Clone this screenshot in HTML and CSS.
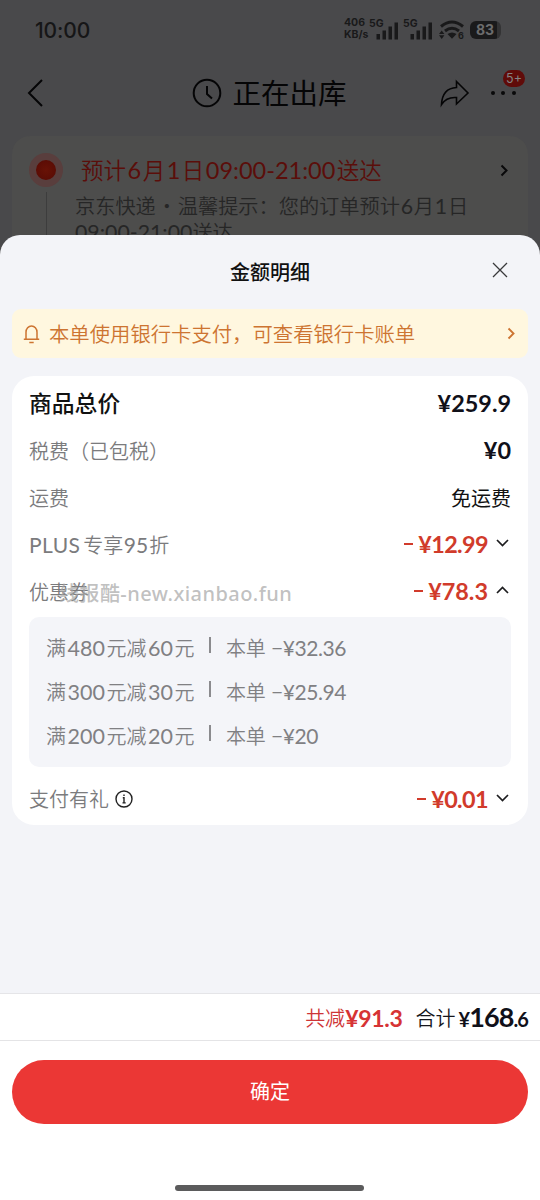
FILE: index.html
```html
<!DOCTYPE html>
<html lang="zh-CN">
<head>
<meta charset="utf-8">
<meta name="viewport" content="width=device-width, initial-scale=1">
<title>金额明细</title>
<link rel="stylesheet" href="styles.css">
</head>
<body>
<div class="screen">
  <section class="order">
    <div class="status">
      <span class="clock">10:00</span>
      <div class="indicators">
        <div class="speed"><span>406</span><span>KB/s</span></div>
        <div class="signal"><span class="gen">5G</span><svg width="24" height="19" viewBox="0 0 24 19"><path d="M1.500 13h3.500v5.500H1.500zM7.500 9.500h3.500v9H7.500zM13.500 5.500h3.500v13H13.500zM19.500 1.500h3.500v17H19.500z"/></svg></div>
        <div class="signal second"><span class="gen">5G</span><svg width="24" height="19" viewBox="0 0 24 19"><path d="M1.500 13h3.500v5.500H1.500zM7.500 9.500h3.500v9H7.500zM13.500 5.500h3.500v13H13.500zM19.500 1.500h3.500v17H19.500z"/></svg></div>
        <svg class="wifi" width="26" height="20" viewBox="0 0 26 20"><g fill="none" stroke="#19191a" stroke-width="3"><path d="M2 6.500Q13-2.500 24 6.500"/><path d="M6 11Q13 5.500 20 11"/></g><path d="M8.500 14q4.500-3 9 0L13 18.800zM0 14l2.700-3.500L5.400 14zM0 15.300h5.400L2.700 19z"/><text x="19" y="19.300">6</text></svg>
        <div class="battery"><span>83</span></div>
      </div>
    </div>
    <div class="nav">
      <svg class="back" width="18" height="30" viewBox="0 0 18 30"><path d="M16 2 3 15l13 13"/></svg>
      <div class="state">
        <svg width="30" height="30" viewBox="0 0 30 30"><circle cx="15" cy="15" r="13.300"/><path d="M15 8v8l5 4.500"/></svg>
        <h1>正在出库</h1>
      </div>
      <div class="actions">
        <svg width="30" height="28" viewBox="0 0 30 28"><path d="M16.500 2.500 28 14 16.500 25v-6.500C10 18 5 20 1.500 25.500 2 15.500 7 9 16.500 8.500z"/></svg>
        <div class="more"><i></i><i></i><i></i><span class="badge">5+</span></div>
      </div>
    </div>
    <div class="delivery">
      <div class="track"><i class="pin"></i><i class="line"></i></div>
      <div class="info">
        <p class="eta">预计<b>6</b>月<b>1</b>日<b>09:00-21:00</b>送达</p>
        <p class="tip">京东快递<span class="dot">·</span>温馨提示：您的订单预计<b>6</b>月<b>1</b>日<br><b class="hours">09:00-21:00</b>送达</p>
      </div>
      <svg class="go" width="9" height="13" viewBox="0 0 9 13"><path d="M1.500 1.500l5 5-5 5"/></svg>
    </div>
  </section>

  <section class="sheet">
    <header class="sheet-head">
      <h2>金额明细</h2>
      <svg class="close" width="16" height="16" viewBox="0 0 16 16"><path d="M1 1l14 14M15 1 1 15"/></svg>
    </header>
    <div class="notice">
      <svg width="17" height="20" viewBox="0 0 17 20"><path d="M.8 15.300h15.400M3 15V8.300a5.500 6.300 0 0 1 11 0V15M6.300 18.600h4.400"/></svg>
      <span>本单使用银行卡支付，可查看银行卡账单</span>
      <svg class="notice-go" width="8" height="13" viewBox="0 0 8 13"><path d="M1.500 1.500l5 5-5 5"/></svg>
    </div>
    <div class="card">
      <div class="row total"><span class="label">商品总价</span><span class="price dark">¥259.9</span></div>
      <div class="row"><span class="label">税费（已包税）</span><span class="price dark">¥0</span></div>
      <div class="row"><span class="label">运费</span><span class="free">免运费</span></div>
      <div class="row"><span class="label plus"><b>PLUS</b>专享<b>95</b>折</span><span class="price cut tight"><i></i>¥12.99</span><svg class="fold" width="13" height="8" viewBox="0 0 13 8"><path d="M1 1l5.500 5.500L12 1"/></svg></div>
      <div class="row"><span class="label">优惠券</span><span class="price cut"><i></i>¥78.3</span><svg class="fold" width="13" height="8" viewBox="0 0 13 8"><path d="M1 7l5.500-5.500L12 7"/></svg><span class="watermark">线报酷-new.xianbao.fun</span></div>
      <ul class="coupons">
        <li><span>满<b>480</b>元减<b>60</b>元</span><i></i><span>本单</span><b class="amount">−¥32.36</b></li>
        <li><span>满<b>300</b>元减<b>30</b>元</span><i></i><span>本单</span><b class="amount">−¥25.94</b></li>
        <li><span>满<b>200</b>元减<b>20</b>元</span><i></i><span>本单</span><b class="amount">−¥20</b></li>
      </ul>
      <div class="row gift"><span class="label">支付有礼</span><svg class="about" width="18" height="18" viewBox="0 0 18 18"><circle cx="9" cy="9" r="8"/><path d="M7.800 7.800H9v5M7.500 12.900h3.200M9 4.600v1.500"/></svg><span class="price cut tight"><i></i>¥0.01</span><svg class="fold" width="13" height="8" viewBox="0 0 13 8"><path d="M1 1l5.500 5.500L12 1"/></svg></div>
    </div>
    <footer class="footer">
      <div class="sum"><span class="saved">共减</span><strong class="saved-value">¥91.3</strong><span class="sum-label">合计</span><strong class="pay"><small class="yen">¥</small>168<small>.6</small></strong></div>
      <button class="confirm" type="button">确定</button>
      <div class="home"></div>
    </footer>
  </section>
</div>
</body>
</html>
```

FILE: styles.css
```css
* { box-sizing: border-box; margin: 0; padding: 0; }
body { background: #f3f4f8; font-family: "Noto Sans CJK SC", sans-serif; font-size: 20px; }
b { font-family: Lato, sans-serif; font-weight: 400; }
i { font-style: normal; }
svg { display: block; flex: none; overflow: visible; }
.screen { width: 540px; height: 1200px; overflow: hidden; display: flex; flex-direction: column; }

/* dimmed order page */
.order { height: 260px; flex: none; overflow: hidden; background: #49494b; }
.status { height: 60px; padding: 0 39px 0 35px; display: flex; align-items: center; justify-content: space-between; }
.clock { padding-top: 2px; font: 500 21px/24px Inter, sans-serif; color: #161617; letter-spacing: -.1px; }
.indicators { display: flex; align-items: center; color: #19191a; fill: #19191a; }
.speed { width: 25px; display: flex; flex-direction: column; margin-top: -2px; font: 700 10.500px/12px Inter, sans-serif; }
.signal { width: 30px; display: flex; position: relative; justify-content: flex-end; }
.gen { position: absolute; left: 0; top: -3px; font: 700 10.500px/11px Inter, sans-serif; }
.signal.second { width: 34px; }
.second .gen { left: 4px; }
.wifi { margin-left: 6px; }
.wifi text { font: 700 9px Inter, sans-serif; }
.battery { margin-left: 5px; width: 31px; height: 18px; border-radius: 6px; background: linear-gradient(90deg, #1a1a1b 27px, #333334 27px); display: flex; align-items: center; padding-left: 6px; font: 700 14px/18px Inter, sans-serif; color: #6c6c6d; }
.nav { height: 66px; padding: 0 24px 0 26px; display: flex; align-items: center; justify-content: space-between; }
.nav svg { fill: none; stroke: #050506; stroke-width: 2; }
.back { margin-right: 55px; }
.state { display: flex; align-items: center; gap: 10px; }
h1 { margin-top: -2px; font-size: 28.500px; font-weight: 400; line-height: 40px; color: #050506; }
.actions { display: flex; align-items: center; gap: 21px; }
.actions svg { stroke-width: 1.600; }
.more { width: 25px; display: flex; justify-content: space-between; position: relative; }
.more i { width: 4px; height: 4px; border-radius: 50%; background: #09090a; }
.badge { position: absolute; right: -9px; top: -21px; width: 22px; height: 17px; border-radius: 9px; background: #600b09; color: #838383; font: 12.500px/17px Inter, sans-serif; text-align: center; }
.delivery { margin: 10px 12px 0; height: 130px; border-radius: 18px; background: #4d4d4c; display: flex; padding: 17px 19px 0 17px; }
.track { width: 34px; display: flex; flex-direction: column; align-items: center; flex: none; }
.pin { width: 34px; height: 34px; border: 7.500px solid #593e3d; border-radius: 50%; background: radial-gradient(#681206, #560a04); }
.line { width: 1px; height: 60px; margin-top: 5px; background: #3d3d3d; }
.info { margin: -1px 0 0 12px; white-space: nowrap; font-weight: 350; }
.eta { padding-left: 6px; font-size: 22.500px; line-height: 34px; color: #5b0e0a; }
.eta b { margin: 0 1.500px; font-size: 23.500px; }
.tip { font-size: 20.200px; line-height: 26px; margin-top: 6px; color: #262626; }
.tip b { margin: 0 .8px; font-size: 21.300px; }
.tip .hours { margin: 0; }
.dot { display: inline-block; width: 22px; text-align: center; }
.go { margin: 11px 0 0 auto; fill: none; stroke: #09090a; stroke-width: 2; }

/* bottom sheet */
.sheet { flex: 1; margin-top: -25px; position: relative; display: flex; flex-direction: column; border-radius: 20px 20px 0 0; background: #f3f4f8; }
.sheet-head { height: 74px; padding-bottom: 2px; display: flex; align-items: center; justify-content: center; position: relative; }
h2 { font-size: 20px; font-weight: 500; color: #111; }
.close { position: absolute; right: 32px; top: 27px; fill: none; stroke: #39393b; stroke-width: 1.300; }
.notice { height: 49px; margin: 0 12px; padding: 0 13px 0 11px; border-radius: 9px; background: #fff7df; color: #cd7431; display: flex; align-items: center; font-size: 20.350px; font-weight: 350; }
.notice span { margin-top: -2px; }
.notice svg { fill: none; stroke: #cd7431; stroke-width: 1.500; margin-right: 9px; }
.notice .notice-go { margin: 0 0 0 auto; stroke-width: 1.900; }
.card { margin: 18px 12px 0; height: 449px; padding: 4px 17px 0; border-radius: 22px; background: #fff; }
.row { height: 47px; display: flex; align-items: center; position: relative; color: #7b7b7d; white-space: nowrap; }
.label { margin-top: -1px; font-weight: 350; }
.total .label { margin-top: -3px; font-size: 22.800px; font-weight: 500; color: #111; }
.plus b { margin: 0 1px 0 .5px; font-size: 21px; }
.plus b:first-child { margin: 0 3px 0 0; letter-spacing: .4px; }
.price { margin: -1px 0 0 auto; font: 700 23.400px/30px Lato, sans-serif; display: flex; align-items: center; }
.dark { color: #101019; }
.cut { color: #d13b2b; }
.tight { letter-spacing: -.6px; }
.cut i { width: 9px; height: 2px; margin-right: 5px; background: #d13b2b; }
.free { margin: -1px 0 0 auto; color: #111; }
.fold { margin: -3px 2px 0 8px; fill: none; stroke: #1c1c1e; stroke-width: 1.700; }
.watermark { position: absolute; left: 30px; top: 14px; font: 500 20px/24px "Noto Sans", "Noto Sans CJK SC", sans-serif; letter-spacing: .45px; color: rgba(165, 165, 165, .7); }
.coupons { list-style: none; margin-top: 2px; height: 150px; padding: 8px 17px; border-radius: 10px; background: #f4f5f9; color: #808083; font-weight: 350; }
.coupons li { height: 44px; display: flex; align-items: center; white-space: nowrap; }
.coupons b { margin: 0 1.500px; font-size: 21.500px; }
.coupons i { width: 1.500px; height: 16px; margin: -5px 15px 0 15px; background: #8b8b8e; }
.coupons .amount { margin-left: 5px; font-size: 21px; letter-spacing: -.4px; }
.gift { height: 58px; padding-top: 6px; }
.about { margin-left: 6px; fill: none; stroke: #222; stroke-width: 1.400; }

.footer { margin-top: auto; height: 207px; border-top: 1px solid #e5e5e8; background: #fff; display: flex; flex-direction: column; }
.sum { height: 47px; padding: 2px 12px 0 0; border-bottom: 1px solid #e4e4e6; display: flex; align-items: center; justify-content: flex-end; color: #16161c; }
.saved, .sum-label { margin-top: -2px; font-weight: 350; }
.saved { color: #ce3537; }
.saved-value { font: 700 23px/30px Lato, sans-serif; letter-spacing: -.3px; color: #d63334; }
.sum-label { margin-left: 13px; margin-right: 3px; }
.pay { font: 700 27px/30px Lato, sans-serif; letter-spacing: -.9px; color: #101019; }
.pay small { font-size: 20px; }
.confirm { margin: 19px 12px 0; height: 64px; padding-bottom: 2px; border: 0; border-radius: 32px; background: #eb3735; color: #fff; font: 400 20px/30px "Noto Sans CJK SC", sans-serif; }
.home { width: 189px; height: 6px; margin: 61px 0 0 175px; border-radius: 3px; background: #5b5b5c; }
```
